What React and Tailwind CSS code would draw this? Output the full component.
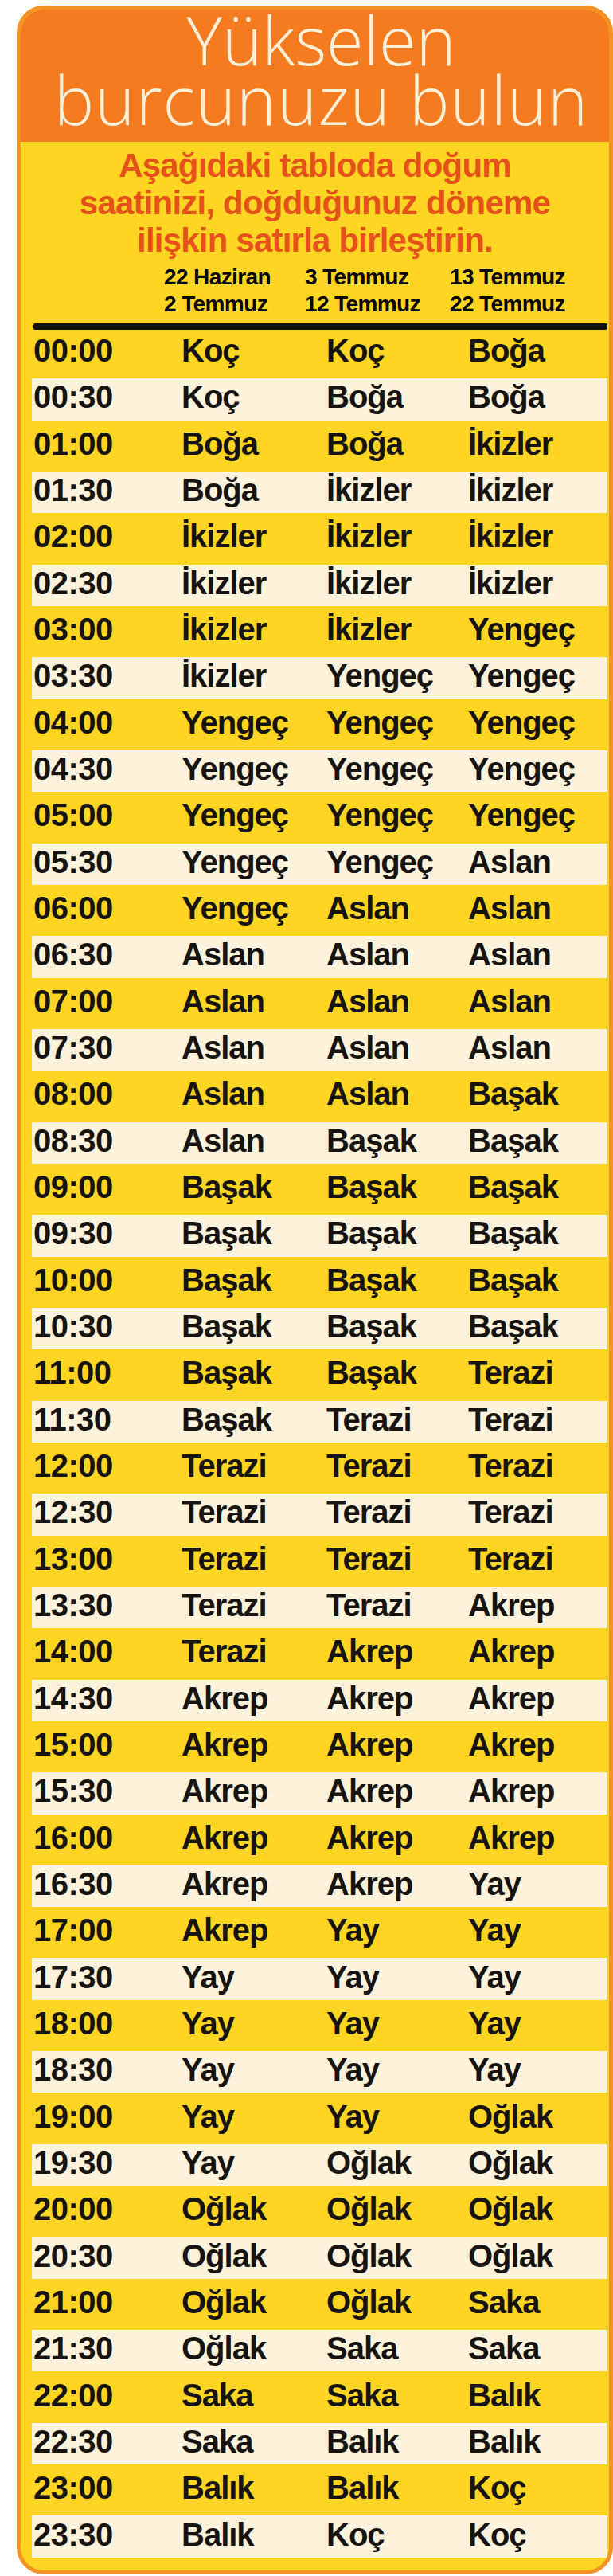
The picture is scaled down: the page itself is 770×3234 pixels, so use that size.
const rows = [
  ["00:00", "Koç", "Koç", "Boğa"],
  ["00:30", "Koç", "Boğa", "Boğa"],
  ["01:00", "Boğa", "Boğa", "İkizler"],
  ["01:30", "Boğa", "İkizler", "İkizler"],
  ["02:00", "İkizler", "İkizler", "İkizler"],
  ["02:30", "İkizler", "İkizler", "İkizler"],
  ["03:00", "İkizler", "İkizler", "Yengeç"],
  ["03:30", "İkizler", "Yengeç", "Yengeç"],
  ["04:00", "Yengeç", "Yengeç", "Yengeç"],
  ["04:30", "Yengeç", "Yengeç", "Yengeç"],
  ["05:00", "Yengeç", "Yengeç", "Yengeç"],
  ["05:30", "Yengeç", "Yengeç", "Aslan"],
  ["06:00", "Yengeç", "Aslan", "Aslan"],
  ["06:30", "Aslan", "Aslan", "Aslan"],
  ["07:00", "Aslan", "Aslan", "Aslan"],
  ["07:30", "Aslan", "Aslan", "Aslan"],
  ["08:00", "Aslan", "Aslan", "Başak"],
  ["08:30", "Aslan", "Başak", "Başak"],
  ["09:00", "Başak", "Başak", "Başak"],
  ["09:30", "Başak", "Başak", "Başak"],
  ["10:00", "Başak", "Başak", "Başak"],
  ["10:30", "Başak", "Başak", "Başak"],
  ["11:00", "Başak", "Başak", "Terazi"],
  ["11:30", "Başak", "Terazi", "Terazi"],
  ["12:00", "Terazi", "Terazi", "Terazi"],
  ["12:30", "Terazi", "Terazi", "Terazi"],
  ["13:00", "Terazi", "Terazi", "Terazi"],
  ["13:30", "Terazi", "Terazi", "Akrep"],
  ["14:00", "Terazi", "Akrep", "Akrep"],
  ["14:30", "Akrep", "Akrep", "Akrep"],
  ["15:00", "Akrep", "Akrep", "Akrep"],
  ["15:30", "Akrep", "Akrep", "Akrep"],
  ["16:00", "Akrep", "Akrep", "Akrep"],
  ["16:30", "Akrep", "Akrep", "Yay"],
  ["17:00", "Akrep", "Yay", "Yay"],
  ["17:30", "Yay", "Yay", "Yay"],
  ["18:00", "Yay", "Yay", "Yay"],
  ["18:30", "Yay", "Yay", "Yay"],
  ["19:00", "Yay", "Yay", "Oğlak"],
  ["19:30", "Yay", "Oğlak", "Oğlak"],
  ["20:00", "Oğlak", "Oğlak", "Oğlak"],
  ["20:30", "Oğlak", "Oğlak", "Oğlak"],
  ["21:00", "Oğlak", "Oğlak", "Saka"],
  ["21:30", "Oğlak", "Saka", "Saka"],
  ["22:00", "Saka", "Saka", "Balık"],
  ["22:30", "Saka", "Balık", "Balık"],
  ["23:00", "Balık", "Balık", "Koç"],
  ["23:30", "Balık", "Koç", "Koç"],
];

const sans = "font-['Liberation_Sans',Arial,sans-serif]";

export default function App() {
  return (
    <div className="bg-white w-[770px] h-[3234px] pt-[7px] pl-[21px]">
      <div className="w-[749px] h-[3225px] rounded-[34px] border-[5px] border-[#f39325] bg-[#fed523] overflow-hidden flex flex-col">
        {/* baslik */}
        <div className="bg-[#f47b20] pt-[7px] pb-[9px] pl-[16px] text-center text-[#fdf0d8] font-['Open_Sans',sans-serif] font-light text-[85px] leading-[60px]">
          <div className="h-[75px]">Yükselen</div>
          <div className="h-[75px] tracking-[1px]">burcunuzu bulun</div>
        </div>

        <div
          className={`pt-[6px] text-center text-[#e6501a] font-bold text-[42px] leading-[47px] tracking-[-0.8px] ${sans}`}
        >
          <div>Aşağıdaki tabloda doğum</div>
          <div>saatinizi, doğduğunuz döneme</div>
          <div>ilişkin satırla birleştirin.</div>
        </div>

        <div className="ml-[14px] mr-[2px]">
          <div
            className={`mt-[6px] pl-[2px] grid grid-cols-[164px_177px_182px_1fr] text-black font-bold text-[28px] leading-[34px] tracking-[-0.6px] ${sans}`}
          >
            <div />
            <div>
              <div>22 Haziran</div>
              <div>2 Temmuz</div>
            </div>
            <div>
              <div>3 Temmuz</div>
              <div>12 Temmuz</div>
            </div>
            <div>
              <div>13 Temmuz</div>
              <div>22 Temmuz</div>
            </div>
          </div>

          <div className="mt-[7px] ml-[2px] h-[8px] bg-[#111] rounded-[2px]" />

          <div className={`text-[#161310] font-bold text-[40px] leading-[40px] ${sans}`}>
            {rows.map((r, i) => (
              <div
                key={r[0]}
                className={`h-[58.33px] pl-[2px] pb-[6px] grid grid-cols-[186px_182px_178px_1fr] items-center ${
                  i % 2 === 1
                    ? "bg-[#fdf3dc] border-y-[3px] border-[#fed523]"
                    : ""
                }`}
              >
                <div className="tracking-[-0.5px]">{r[0]}</div>
                <div className="tracking-[-1px]">{r[1]}</div>
                <div className="tracking-[-1px]">{r[2]}</div>
                <div className="tracking-[-1px]">{r[3]}</div>
              </div>
            ))}
          </div>
        </div>
      </div>
    </div>
  );
}
